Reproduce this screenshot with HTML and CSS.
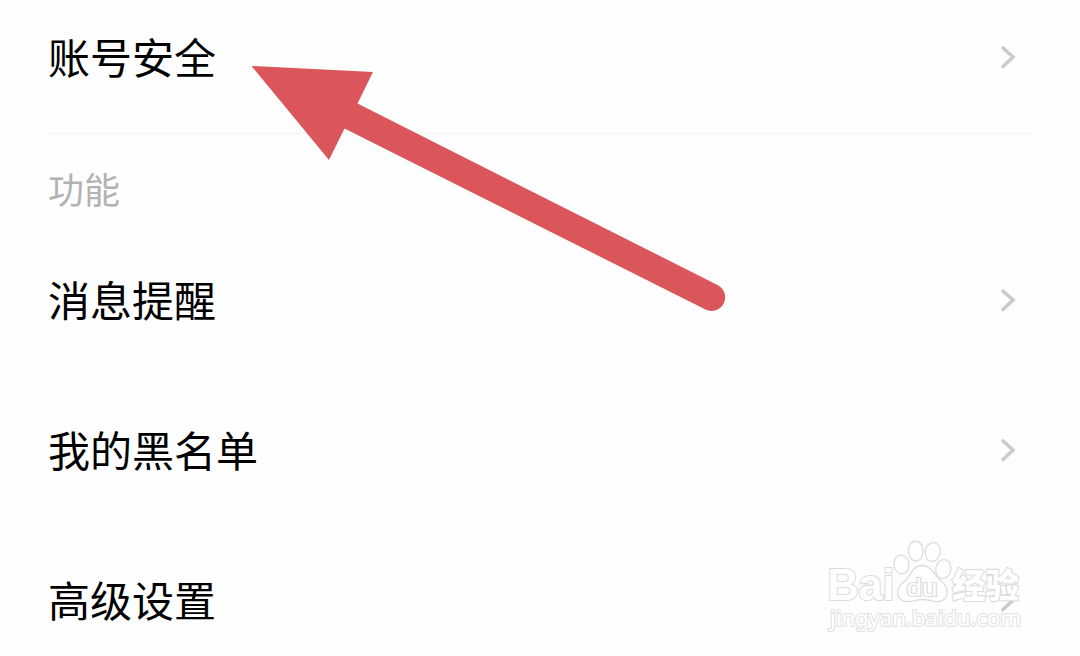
FILE: index.html
```html
<!DOCTYPE html>
<html lang="zh-CN">
<head>
    <meta charset="UTF-8">
    <meta name="viewport" content="width=device-width, initial-scale=1.0">
    <title>设置</title>
    <link rel="stylesheet" href="styles.css">
</head>
<body>

    <div class="settings">
        <div class="row row-first">
            <span class="row-text">账号安全</span>
            <svg class="chevron" viewBox="0 0 16 24"><path d="M3 3 L13 12 L3 21.500"/></svg>
        </div>
        <div class="divider"></div>

        <div class="section-title">功能</div>
        <div class="row">
            <span class="row-text">消息提醒</span>
            <svg class="chevron" viewBox="0 0 16 24"><path d="M3 3 L13 12 L3 21.500"/></svg>
        </div>
        <div class="row">
            <span class="row-text">我的黑名单</span>
            <svg class="chevron" viewBox="0 0 16 24"><path d="M3 3 L13 12 L3 21.500"/></svg>
        </div>
        <div class="row">
            <span class="row-text">高级设置</span>
            <svg class="chevron" viewBox="0 0 16 24"><path d="M3 3 L13 12 L3 21.500"/></svg>
        </div>
    </div>

    <!-- Arrow pointing at the first row -->
    <svg class="arrow" viewBox="0 0 480 260">
        <path d="M1.500 6 L123 12 L107.500 43.500 L467.500 225 A13.500 13.500 0 0 1 455.500 249.500 L94.500 68.500 L79 100 Z"/>
    </svg>

    <!-- Watermark -->
    <svg class="watermark" viewBox="0 0 210 100">
        <text class="mark-logo" x="7.500" y="60" textLength="67" lengthAdjust="spacingAndGlyphs">Bai</text>
        <path d="M102 25.500 C91 26 91 36 85 41 C75 48 75 60 86 61.500 C93 62 96 59.500 102 59.500 C109 59.500 113 62 119 61.500 C129 60 130 48 121 41 C114 35 113 26 102 25.500 Z"/>
        <ellipse cx="81.500" cy="24.500" rx="7.500" ry="9.500" transform="rotate(-8 81.500 24.500)"/>
        <ellipse cx="95.700" cy="11" rx="7.300" ry="10"/>
        <ellipse cx="112.700" cy="12" rx="7.500" ry="9.500" transform="rotate(10 112.700 12)"/>
        <ellipse cx="123.300" cy="29" rx="7.500" ry="9.500" transform="rotate(10 123.300 29)"/>
        <text class="mark-du" x="86.500" y="55.500" textLength="31" lengthAdjust="spacingAndGlyphs">du</text>
        <text class="mark-cn" x="132" y="58" textLength="67" lengthAdjust="spacingAndGlyphs">经验</text>
        <text class="mark-url" x="10" y="86" textLength="191" lengthAdjust="spacingAndGlyphs">jingyan.baidu.com</text>
    </svg>

</body>
</html>
```

FILE: styles.css
```css
body {
    position: relative;
    height: 656px;
    margin: 0;
    overflow: hidden;
    background: #fefefe;
    color: #000;
    font-family: "Noto Sans CJK SC", sans-serif;
}

.settings {
    padding: 0 50px 0 48px;
}

.row {
    display: flex;
    align-items: center;
    justify-content: space-between;
    height: 150px;
    padding-right: 14px;
}

.row-first {
    box-sizing: border-box;
    height: 132px;
    padding-bottom: 18px;
}

.row-text {
    padding-bottom: 2px;
    font-size: 42px;
    line-height: 60px;
}

.chevron {
    width: 16px;
    height: 24px;
    fill: none;
    stroke: #cbcbcb;
    stroke-width: 3.6;
    stroke-linecap: round;
}

.divider {
    height: 3px;
    background: #f8f8f8;
}

.section-title {
    height: 90px;
    color: #b2b2b2;
    font-size: 36px;
    line-height: 107px;
}

.arrow {
    position: absolute;
    left: 250px;
    top: 60px;
    width: 480px;
    height: 260px;
    fill: #da565b;
}

.watermark {
    position: absolute;
    left: 820px;
    top: 540px;
    width: 210px;
    height: 100px;
    fill: #fff;
    stroke: #dcdcdc;
    stroke-width: 1.3;
}

.watermark text {
    font-family: "Liberation Sans", "Noto Sans CJK SC", sans-serif;
    paint-order: stroke;
    stroke-width: 2.2;
}

.mark-logo {
    font-size: 44px;
    font-weight: bold;
}

.mark-du {
    font-size: 23px;
}

.watermark .mark-cn {
    font-family: "Noto Sans CJK SC", sans-serif;
    font-size: 34px;
    font-weight: 900;
}

.watermark .mark-url {
    font-family: "Noto Sans", sans-serif;
    font-size: 22px;
    stroke: #e2e2e2;
}
```
